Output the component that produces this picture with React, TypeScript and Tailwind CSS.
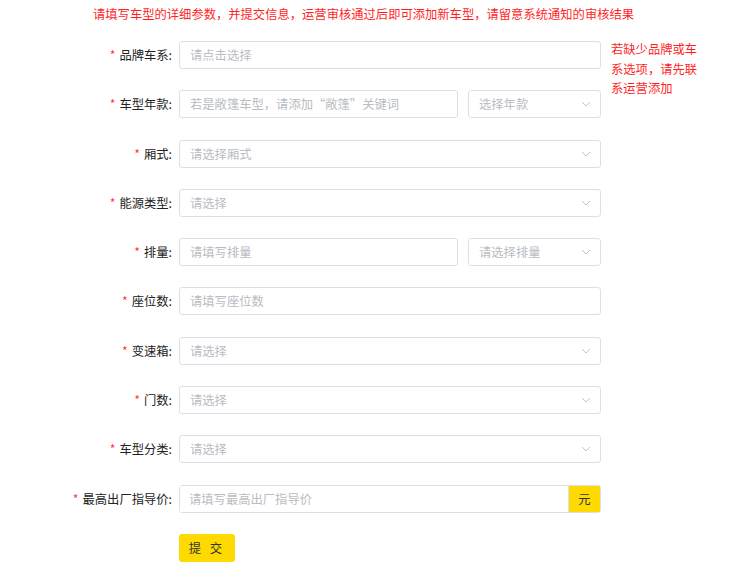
import React from "react";

type Field = {
  label: string;
  placeholder: string;
  select?: boolean;
  extra?: string; // second select beside the input
  unit?: string;
  note?: boolean;
};

const fields: Field[] = [
  { label: "品牌车系", placeholder: "请点击选择", note: true },
  { label: "车型年款", placeholder: "若是敞篷车型，请添加“敞篷”关键词", extra: "选择年款" },
  { label: "厢式", placeholder: "请选择厢式", select: true },
  { label: "能源类型", placeholder: "请选择", select: true },
  { label: "排量", placeholder: "请填写排量", extra: "请选择排量" },
  { label: "座位数", placeholder: "请填写座位数" },
  { label: "变速箱", placeholder: "请选择", select: true },
  { label: "门数", placeholder: "请选择", select: true },
  { label: "车型分类", placeholder: "请选择", select: true },
  { label: "最高出厂指导价", placeholder: "请填写最高出厂指导价", unit: "元" },
];

function Chevron() {
  return (
    <svg width="10" height="10" viewBox="0 0 10 10" className="shrink-0">
      <polyline
        points="1,3 5,7 9,3"
        fill="none"
        stroke="#c0c4cc"
        strokeWidth="1"
      />
    </svg>
  );
}

function Box({
  placeholder,
  select,
  className,
}: {
  placeholder: string;
  select?: boolean;
  className: string;
}) {
  return (
    <div
      className={`h-[28px] flex items-center justify-between border border-[#dcdfe6] rounded-[3px] bg-white pl-[10px] pr-[9px] ${className}`}
    >
      <span className="text-[#b9bcc2] whitespace-nowrap overflow-hidden">
        {placeholder}
      </span>
      {select && <Chevron />}
    </div>
  );
}

export default function App() {
  return (
    <div
      className="min-h-[584px] bg-white text-[12.3px] leading-[20px]"
      style={{ fontFamily: '"Noto Sans CJK SC", "Noto Sans", sans-serif' }}
    >
      <p className="pt-[4px] pl-[93px] text-[#ff1f1f] whitespace-nowrap">
        请填写车型的详细参数，并提交信息，运营审核通过后即可添加新车型，请留意系统通知的审核结果
      </p>

      <div className="mt-[17px] flex flex-col gap-[21.3px]">
        {fields.map((f) => (
          <div key={f.label} className="flex items-start h-[28px]">
            <label className="w-[179px] pr-[7px] h-[28px] flex items-center justify-end text-[#222] whitespace-nowrap">
              <span className="text-[#f33] mr-[4px]">*</span>
              {f.label}:
            </label>

            {f.extra ? (
              <div className="flex gap-[10px] w-[422px]">
                <Box placeholder={f.placeholder} className="w-[279px]" />
                <Box placeholder={f.extra} select className="w-[133px]" />
              </div>
            ) : f.unit ? (
              <div className="flex w-[422px] h-[28px] border border-[#dcdfe6] rounded-[3px]">
                <div className="flex-1 flex items-center pl-[9px] bg-white text-[#b9bcc2]">
                  {f.placeholder}
                </div>
                <div className="w-[32px] flex items-center justify-center bg-[#ffda00] text-[#333] border-l border-[#dcdfe6]">
                  {f.unit}
                </div>
              </div>
            ) : (
              <Box
                placeholder={f.placeholder}
                select={f.select}
                className="w-[422px]"
              />
            )}

            {f.note && (
              <p className="ml-[10px] mt-[-1px] leading-[19.5px] text-[#ff1f1f] whitespace-nowrap">
                若缺少品牌或车
                <br />
                系选项，请先联
                <br />
                系运营添加
              </p>
            )}
          </div>
        ))}

        <div className="pl-[179px]">
          <button className="w-[56px] h-[28px] rounded-[3px] bg-[#ffda00] text-[#333] tracking-[3px]">
            提 交
          </button>
        </div>
      </div>
    </div>
  );
}
